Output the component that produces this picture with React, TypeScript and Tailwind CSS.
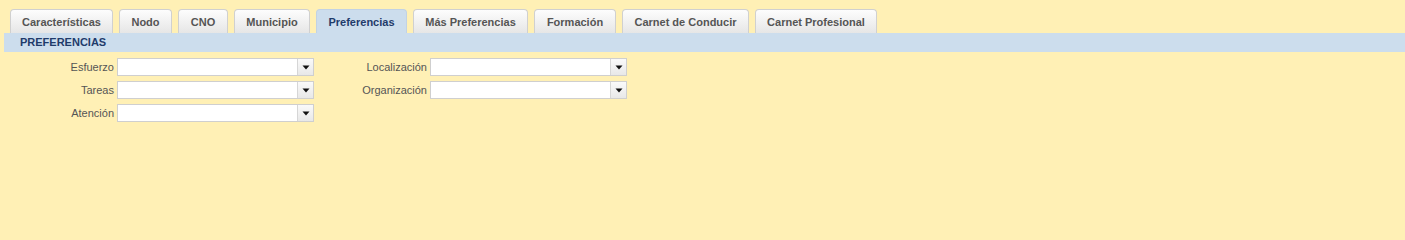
import React from 'react';

const tabs = [
    { label: 'Características', w: 'w-[103px]' },
    { label: 'Nodo', w: 'w-[53px]' },
    { label: 'CNO', w: 'w-[50px]' },
    { label: 'Municipio', w: 'w-[76px]' },
    { label: 'Preferencias', w: 'w-[91px]', active: true },
    { label: 'Más Preferencias', w: 'w-[115px]' },
    { label: 'Formación', w: 'w-[82px]' },
    { label: 'Carnet de Conducir', w: 'w-[127px]' },
    { label: 'Carnet Profesional', w: 'w-[122px]' },
];

function SelectBox() {
    return (
        <div className="flex h-[18px] w-[197px] border border-[#cfcfcf] bg-white">
            <div className="flex-1" />
            <div className="flex w-[16px] items-center justify-center border-l border-[#d6d6d6] bg-gradient-to-b from-[#fafafa] to-[#e8e8e8]">
                <svg width="8" height="5" viewBox="0 0 8 5">
                    <path d="M0.5 0.5 L7.5 0.5 L4 4.5 Z" fill="#111" />
                </svg>
            </div>
        </div>
    );
}

function Field({ label, labelW }: { label: string; labelW: string }) {
    return (
        <div className="flex items-center">
            <span className={`${labelW} pr-[3px] text-right text-[11px] text-[#555]`}>{label}</span>
            <SelectBox />
        </div>
    );
}

export default function App() {
    return (
        <div className="min-h-screen bg-[#fff0b5] font-['Liberation_Sans',Arial,sans-serif]">
            {/* Tabs */}
            <div className="flex gap-[6px] pl-[10px] pt-[9px]">
                {tabs.map((t) => (
                    <div
                        key={t.label}
                        className={`${t.w} h-[24px] rounded-t-[4px] border border-b-0 pt-[4px] text-center text-[11px] font-bold ${
                            t.active
                                ? 'border-[#c2d2e4] bg-[#ccdded] text-[#1f3b6b]'
                                : 'border-[#d0d0d0] bg-gradient-to-b from-[#fdfdfd] to-[#e6e6e6] text-[#555]'
                        }`}
                    >
                        {t.label}
                    </div>
                ))}
            </div>

            {/* Section header */}
            <div className="ml-[4px] flex h-[19px] items-center bg-[#ccdded] pl-[16px] text-[11px] font-bold text-[#1f3b6b]">
                PREFERENCIAS
            </div>

            {/* Form */}
            <div className="flex pt-[6px]">
                <div className="flex flex-col gap-[5px]">
                    <Field label="Esfuerzo" labelW="w-[117px]" />
                    <Field label="Tareas" labelW="w-[117px]" />
                    <Field label="Atención" labelW="w-[117px]" />
                </div>
                <div className="flex flex-col gap-[5px]">
                    <Field label="Localización" labelW="w-[116px]" />
                    <Field label="Organización" labelW="w-[116px]" />
                </div>
            </div>
        </div>
    );
}
